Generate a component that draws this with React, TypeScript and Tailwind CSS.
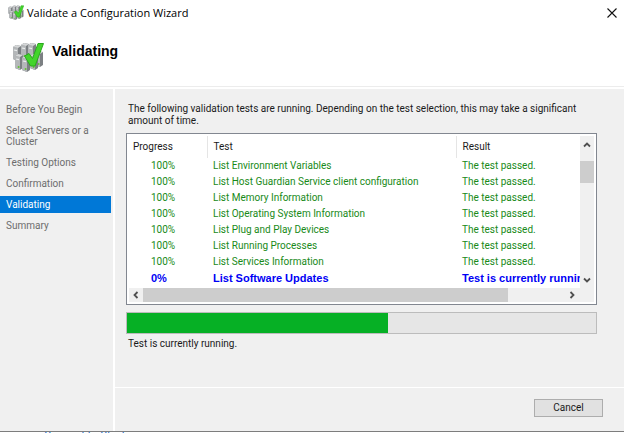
import React from "react";

const steps = [
  "Before You Begin",
  "Select Servers or a Cluster",
  "Testing Options",
  "Confirmation",
  "Validating",
  "Summary",
];

const tests = [
  "List Environment Variables",
  "List Host Guardian Service client configuration",
  "List Memory Information",
  "List Operating System Information",
  "List Plug and Play Devices",
  "List Running Processes",
  "List Services Information",
];

function Tower({ x, y }: { x: number; y: number }) {
  return (
    <g transform={`translate(${x} ${y})`}>
      <path d="M0 2 L3 0 L8 1 L8 14 L5 16 L0 14 Z" fill="#7c8083" />
      <path d="M0 2 L5 3 L5 16 L0 14 Z" fill="#b4b7b9" />
      <path d="M0 2 L3 0 L8 1 L5 3 Z" fill="#d5d7d8" />
      <path d="M1 5 L4 5.600" stroke="#eceeee" strokeWidth="1.200" />
      <circle cx="3.6" cy="13" r="1" fill="#62c234" />
    </g>
  );
}

function ClusterIcon({ className }: { className: string }) {
  return (
    <svg viewBox="0 0 32 32" className={className} aria-hidden="true">
      <Tower x={9} y={1} />
      <Tower x={16} y={1} />
      <Tower x={23} y={9} />
      <Tower x={1} y={3} />
      <Tower x={3} y={12} />
      <Tower x={18} y={12} />
      <Tower x={10} y={14} />
      <path
        d="M12.500 14 L17 11.500 L20.500 16.500 L26 1.500 L31.500 1.500 L23 24 L18.500 24 Z"
        fill="#43d52b"
        stroke="#2ba81f"
        strokeWidth="1"
        strokeLinejoin="round"
      />
    </svg>
  );
}

function Chevron({ d }: { d: string }) {
  return (
    <svg viewBox="0 0 8 8" className="size-2" aria-hidden="true">
      <path d={d} fill="none" stroke="#505050" strokeWidth="1.800" />
    </svg>
  );
}

export default function App() {
  return (
    <div className="flex min-h-screen flex-col bg-[#f0f0f0] font-['Roboto','Liberation_Sans',sans-serif] text-[10px] leading-3 text-[#1a1a1a]">
      <header className="border-b border-[#ececec] bg-white">
        <div className="flex h-[26px] items-center pr-1.5 pl-2">
          <ClusterIcon className="size-4" />
          <span className="ml-[3px] flex-1 font-['Open_Sans','Noto_Sans',sans-serif] text-[11px] leading-4 text-black">
            Validate a Configuration Wizard
          </span>
          <button type="button" aria-label="Close" className="flex size-3 items-center justify-center">
            <svg viewBox="0 0 12 12" className="size-3" aria-hidden="true">
              <path d="M1.500 1.500 L10.500 10.500 M10.500 1.500 L1.500 10.500" stroke="#111" strokeWidth="1.100" />
            </svg>
          </button>
        </div>
        <div className="flex h-15 items-start pt-4 pl-3">
          <ClusterIcon className="size-8 shrink-0" />
          <h1 className="ml-2 font-['Liberation_Sans',Arial,sans-serif] text-[14px] leading-[18px] font-bold text-black">
            Validating
          </h1>
        </div>
      </header>

      <div className="flex flex-1 border-t-2 border-white">
        <nav className="w-[115px] shrink-0 border-r-2 border-white pt-3 pr-0.5">
          <ol className="flex flex-col gap-1 text-[#6d6d6d]">
            {steps.map((step) => (
              <li
                key={step}
                aria-current={step === "Validating" ? "step" : undefined}
                className={
                  step === "Validating"
                    ? "bg-[#0078d7] py-[3px] pr-4 pl-1.5 leading-[11px] text-white"
                    : "py-[3px] pr-4 pl-1.5 leading-[11px]"
                }
              >
                {step}
              </li>
            ))}
          </ol>
        </nav>

        <main className="flex min-w-0 flex-1 flex-col">
          <section className="flex-1 pt-3.5 pr-[27px] pb-9 pl-[11px]">
            <p className="pr-2 pl-0.5">
              The following validation tests are running. Depending on the test selection, this may take a
              significant amount of time.
            </p>
            <div className="mt-1.5 border border-[#828790] bg-white p-0.5">
              <div className="flex">
                <div className="h-[152px] min-w-0 flex-1 overflow-hidden">
                  <table className="w-full table-fixed border-collapse text-left whitespace-nowrap">
                    <thead>
                      <tr className="h-[22px] text-[#1a1a1a]">
                        <th className="w-[78px] border-r border-[#e5e5e5] pl-1 font-normal">Progress</th>
                        <th className="border-r border-[#e5e5e5] pl-1.5 font-normal">Test</th>
                        <th className="w-[124px] pl-1.5 font-normal">Result</th>
                      </tr>
                    </thead>
                    <tbody>
                      {tests.map((test) => (
                        <tr key={test} className="h-4 text-[#188a18]">
                          <td className="pl-[22px]">100%</td>
                          <td className="pl-1.5">{test}</td>
                          <td className="pl-1.5">The test passed.</td>
                        </tr>
                      ))}
                      <tr className="h-4 font-['Liberation_Sans',Arial,sans-serif] text-[11px] font-bold text-[#0000f5]">
                        <td className="pl-[22px]">0%</td>
                        <td className="pl-1.5">List Software Updates</td>
                        <td className="overflow-hidden pl-1.5">Test is currently running.</td>
                      </tr>
                    </tbody>
                  </table>
                </div>
                <div className="flex w-3.5 flex-col bg-[#f0f0f0]">
                  <button type="button" aria-label="Scroll up" className="flex h-[17px] items-center justify-center">
                    <Chevron d="M1 5.500 L4 2.500 L7 5.500" />
                  </button>
                  <div className="mt-2 h-[22px] bg-[#cdcdcd]" />
                  <button type="button" aria-label="Scroll down" className="mt-auto flex h-[17px] items-center justify-center">
                    <Chevron d="M1 2.500 L4 5.500 L7 2.500" />
                  </button>
                </div>
              </div>
              <div className="flex h-3.5 bg-[#f0f0f0] pr-3.5">
                <button type="button" aria-label="Scroll left" className="flex w-3.5 items-center justify-center">
                  <Chevron d="M5.500 1 L2.500 4 L5.500 7" />
                </button>
                <div className="flex-1">
                  <div className="h-full w-[87%] bg-[#cdcdcd]" />
                </div>
                <button type="button" aria-label="Scroll right" className="flex w-[17px] items-center justify-center">
                  <Chevron d="M2.500 1 L5.500 4 L2.500 7" />
                </button>
              </div>
            </div>
            <div
              role="progressbar"
              aria-label="Validation progress"
              aria-valuenow={56}
              aria-valuemin={0}
              aria-valuemax={100}
              className="mt-[7px] h-[22px] border border-[#bcbcbc] bg-[#e6e6e6]"
            >
              <div className="h-full w-5/9 bg-[#06b025]" />
            </div>
            <p className="mt-1 pl-0.5">Test is currently running.</p>
          </section>
          <footer className="flex justify-end border-t border-white pt-[11px] pr-[21px] pb-3.5">
            <button
              type="button"
              className="h-[18px] w-[69px] border border-[#adadad] bg-[#e1e1e1] text-center leading-4"
            >
              Cancel
            </button>
          </footer>
        </main>
      </div>

      <div className="h-0.5 overflow-hidden border-t border-[#7d7d7d] bg-white pl-11">
        <a href="#connect" className="block text-[11px] leading-[7px] text-[#1668c7]">
          Connect to Cluster...
        </a>
      </div>
    </div>
  );
}
